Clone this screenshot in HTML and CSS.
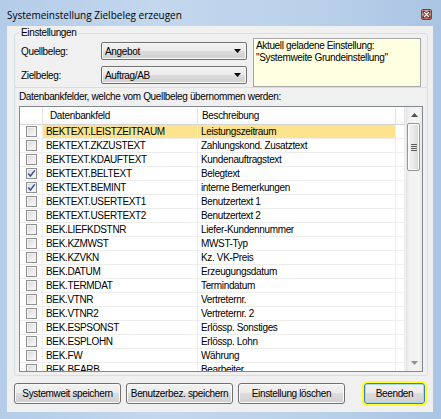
FILE: index.html
```html
<!DOCTYPE html>
<html lang="de">
<head>
<meta charset="utf-8">
<title>Systemeinstellung Zielbeleg erzeugen</title>
<link rel="stylesheet" href="styles.css">
</head>
<body>
<div class="window">
  <div class="titlebar">
    <span class="title">Systemeinstellung Zielbeleg erzeugen</span>
    <span class="close"><svg width="9" height="9" viewBox="0 0 9 9"><path d="M2 2 L7 7 M7 2 L2 7" stroke="#4a2420" stroke-width="2.6" stroke-linecap="square"/><path d="M2 2 L7 7 M7 2 L2 7" stroke="#fff" stroke-width="1.3"/></svg></span>
  </div>
  <div class="client">
    <fieldset class="group">
      <legend>Einstellungen</legend>
      <div class="settings">
        <div class="fields">
          <div class="fieldrow">
            <span class="lbl">Quellbeleg:</span>
            <div class="combo"><span class="cval">Angebot</span><svg class="carrow" width="7" height="4" viewBox="0 0 7 4"><path d="M0 0 H7 L3.5 4 Z" fill="#000"/></svg></div>
          </div>
          <div class="fieldrow">
            <span class="lbl">Zielbeleg:</span>
            <div class="combo"><span class="cval">Auftrag/AB</span><svg class="carrow" width="7" height="4" viewBox="0 0 7 4"><path d="M0 0 H7 L3.5 4 Z" fill="#000"/></svg></div>
          </div>
        </div>
        <div class="info">Aktuell geladene Einstellung:<br>"Systemweite Grundeinstellung"</div>
      </div>
    </fieldset>
    <div class="panel">
      <div class="listlabel">Datenbankfelder, welche vom Quellbeleg übernommen werden:</div>
      <div class="list">
        <div class="grid">
          <div class="hdr">
            <div class="c0"></div>
            <div class="c1 h1">Datenbankfeld</div>
            <div class="c2 h2">Beschreibung</div>
            <div class="c3"></div>
          </div>
          <div class="row sel"><div class="c0"><span class="cb"></span></div><div class="c1">BEKTEXT.LEISTZEITRAUM</div><div class="c2">Leistungszeitraum</div><div class="c3"></div></div>
          <div class="row"><div class="c0"><span class="cb"></span></div><div class="c1">BEKTEXT.ZKZUSTEXT</div><div class="c2">Zahlungskond. Zusatztext</div><div class="c3"></div></div>
          <div class="row"><div class="c0"><span class="cb"></span></div><div class="c1">BEKTEXT.KDAUFTEXT</div><div class="c2">Kundenauftragstext</div><div class="c3"></div></div>
          <div class="row"><div class="c0"><span class="cb"><svg width="9" height="9" viewBox="0 0 9 9"><path d="M1.2 4.6 L3.4 7 L7.8 1.4" fill="none" stroke="#3f4f9a" stroke-width="1.5"/></svg></span></div><div class="c1">BEKTEXT.BELTEXT</div><div class="c2">Belegtext</div><div class="c3"></div></div>
          <div class="row"><div class="c0"><span class="cb"><svg width="9" height="9" viewBox="0 0 9 9"><path d="M1.2 4.6 L3.4 7 L7.8 1.4" fill="none" stroke="#3f4f9a" stroke-width="1.5"/></svg></span></div><div class="c1">BEKTEXT.BEMINT</div><div class="c2">interne Bemerkungen</div><div class="c3"></div></div>
          <div class="row"><div class="c0"><span class="cb"></span></div><div class="c1">BEKTEXT.USERTEXT1</div><div class="c2">Benutzertext 1</div><div class="c3"></div></div>
          <div class="row"><div class="c0"><span class="cb"></span></div><div class="c1">BEKTEXT.USERTEXT2</div><div class="c2">Benutzertext 2</div><div class="c3"></div></div>
          <div class="row"><div class="c0"><span class="cb"></span></div><div class="c1">BEK.LIEFKDSTNR</div><div class="c2">Liefer-Kundennummer</div><div class="c3"></div></div>
          <div class="row"><div class="c0"><span class="cb"></span></div><div class="c1">BEK.KZMWST</div><div class="c2">MWST-Typ</div><div class="c3"></div></div>
          <div class="row"><div class="c0"><span class="cb"></span></div><div class="c1">BEK.KZVKN</div><div class="c2">Kz. VK-Preis</div><div class="c3"></div></div>
          <div class="row"><div class="c0"><span class="cb"></span></div><div class="c1">BEK.DATUM</div><div class="c2">Erzeugungsdatum</div><div class="c3"></div></div>
          <div class="row"><div class="c0"><span class="cb"></span></div><div class="c1">BEK.TERMDAT</div><div class="c2">Termindatum</div><div class="c3"></div></div>
          <div class="row"><div class="c0"><span class="cb"></span></div><div class="c1">BEK.VTNR</div><div class="c2">Vertreternr.</div><div class="c3"></div></div>
          <div class="row"><div class="c0"><span class="cb"></span></div><div class="c1">BEK.VTNR2</div><div class="c2">Vertreternr. 2</div><div class="c3"></div></div>
          <div class="row"><div class="c0"><span class="cb"></span></div><div class="c1">BEK.ESPSONST</div><div class="c2">Erlössp. Sonstiges</div><div class="c3"></div></div>
          <div class="row"><div class="c0"><span class="cb"></span></div><div class="c1">BEK.ESPLOHN</div><div class="c2">Erlössp. Lohn</div><div class="c3"></div></div>
          <div class="row"><div class="c0"><span class="cb"></span></div><div class="c1">BEK.FW</div><div class="c2">Währung</div><div class="c3"></div></div>
          <div class="row"><div class="c0"><span class="cb"></span></div><div class="c1">BEK.BEARB</div><div class="c2">Bearbeiter</div><div class="c3"></div></div>
        </div>
        <div class="vscroll">
          <div class="sbtn"><svg width="7" height="4" viewBox="0 0 7 4"><path d="M0 4 H7 L3.5 0 Z" fill="#505050"/></svg></div>
          <div class="thumb"><span class="grip"></span></div>
          <div class="track"></div>
          <div class="sbtn"><svg width="7" height="4" viewBox="0 0 7 4"><path d="M0 0 H7 L3.5 4 Z" fill="#909090"/></svg></div>
        </div>
      </div>
    </div>
    <div class="buttons">
      <div class="btn">Systemweit speichern</div>
      <div class="btn">Benutzerbez. speichern</div>
      <div class="btn">Einstellung löschen</div>
      <div class="btn default">Beenden</div>
    </div>
  </div>
</div>
</body>
</html>
```
FILE: styles.css
```css
* { box-sizing: border-box; }
html, body { margin: 0; padding: 0; }
body {
  width: 441px;
  height: 419px;
  overflow: hidden;
  font-family: "Liberation Sans", Arial, sans-serif;
  font-size: 10px;
  letter-spacing: -0.35px;
  color: #000;
  background: #fff;
}
.window {
  width: 441px;
  height: 419px;
  display: flex;
  flex-direction: column;
  padding: 0 8px 7px 7px;
  background: linear-gradient(to right, #b4cce8 0%, #c3d7ee 35%, #bbd1ea 70%, #aac4e3 100%);
}
.titlebar {
  height: 26px;
  flex: none;
  display: flex;
  align-items: flex-start;
  justify-content: space-between;
}
.title {
  font-family: "Open Sans", "Liberation Sans", sans-serif;
  font-size: 10px;
  letter-spacing: 0;
  line-height: 14px;
  margin-top: 8px;
  color: #000;
}
.close {
  width: 11px;
  height: 11px;
  margin-top: 9px;
  margin-right: 1px;
  border: 1px solid #7a4038;
  border-radius: 2px;
  background: linear-gradient(#e2a79c, #c06c60);
  display: flex;
  align-items: center;
  justify-content: center;
}
.close svg { display: block; }
.client {
  flex: 1;
  background: #f0f0f0;
  padding: 2px 5px 0 7px;
  display: flex;
  flex-direction: column;
}
.group {
  margin: 0;
  padding: 0 6px 0 5px;
  border: 1px solid #d5dfe5;
  border-radius: 3px;
}
.group legend {
  padding: 0 1px;
  margin-left: 0;
  line-height: 10px;
  font-size: 10px;
}
.settings {
  display: flex;
  gap: 6px;
}
.fields {
  width: 227px;
  padding-top: 4px;
  display: flex;
  flex-direction: column;
  gap: 6px;
}
.fieldrow {
  display: flex;
  align-items: center;
  height: 18px;
}
.lbl {
  width: 81px;
  padding-left: 1px;
}
.combo {
  flex: 1;
  height: 18px;
  border: 1px solid #707070;
  border-radius: 2px;
  background: linear-gradient(#f2f2f2 0%, #ebebeb 50%, #dddddd 50%, #cfcfcf 100%);
  box-shadow: inset 0 0 0 1px #f8f8f8;
  display: flex;
  align-items: center;
  justify-content: space-between;
  padding: 0 5px 0 3px;
}
.carrow { display: block; }
.info {
  flex: 1;
  height: 49px;
  background: #ffffe1;
  border: 1px solid #a7a7a7;
  padding: 1px 2px;
  line-height: 12px;
}
.panel {
  margin-top: -1px;
  border: 1px solid #d5dfe5;
  border-radius: 0 0 3px 3px;
  padding: 2px 4px 3px 4px;
}
.listlabel {
  line-height: 13px;
  margin-bottom: 3px;
}
.list {
  height: 266px;
  border: 1px solid #828790;
  background: #fff;
  display: flex;
  overflow: hidden;
}
.grid {
  flex: 1;
  overflow: hidden;
}
.hdr, .row {
  display: flex;
}
.hdr {
  height: 18px;
  border-bottom: 1px solid #d5d5d5;
  background: linear-gradient(#ffffff, #ffffff 60%, #f7f8f9);
  align-items: stretch;
  line-height: 17px;
}
.hdr > div { border-right: 1px solid #e3e5e7; }
.c0 { width: 23px; flex: none; }
.c1 { width: 155px; flex: none; padding-left: 3px; white-space: nowrap; overflow: hidden; }
.c2 { width: 198px; flex: none; padding-left: 3px; white-space: nowrap; overflow: hidden; }
.c3 { flex: 1; }
.hdr .h1 { padding-left: 7px; }
.hdr .h2 { padding-left: 4px; }
.row {
  height: 14px;
  border-bottom: 1px solid #ededed;
  line-height: 13px;
}
.row > div { border-right: 1px solid #ededed; }
.row .c0 {
  display: flex;
  align-items: center;
  justify-content: center;
}
.row.sel .c1, .row.sel .c2 { background: #fde38b; }
.cb {
  width: 11px;
  height: 11px;
  border: 1px solid #8f8f8f;
  background: linear-gradient(135deg, #d6d6d6 0%, #eeeeee 60%, #fbfbfb 100%);
  box-shadow: inset 0 0 0 1px #f3f3f3;
  display: flex;
  align-items: center;
  justify-content: center;
}
.cb svg { display: block; }
.vscroll {
  width: 17px;
  flex: none;
  display: flex;
  flex-direction: column;
  background: linear-gradient(to right, #e4e4e4 0%, #f2f2f2 20%, #f4f4f4 80%, #e9e9e9 100%);
  border-left: 1px solid #f0f0f0;
}
.sbtn {
  height: 16px;
  flex: none;
  display: flex;
  align-items: center;
  justify-content: center;
}
.sbtn svg { display: block; }
.thumb {
  height: 48px;
  margin: 0 2px 0 1px;
  border: 1px solid #969696;
  border-radius: 2px;
  background: linear-gradient(to right, #f4f4f4 0%, #e9e9e9 50%, #d8d8d8 100%);
  box-shadow: inset 0 0 0 1px #fbfbfb;
  display: flex;
  align-items: center;
  justify-content: center;
}
.grip {
  width: 6px;
  height: 7px;
  background: repeating-linear-gradient(#5c5c5c 0, #5c5c5c 1px, #e8e8e8 1px, #e8e8e8 2px);
}
.track { flex: 1; }
.buttons {
  margin-top: 7px;
  display: flex;
  gap: 5px;
}
.btn {
  width: 107px;
  height: 21px;
  border: 1px solid #707070;
  border-radius: 3px;
  background: linear-gradient(#f2f2f2 0%, #ebebeb 50%, #dddddd 50%, #cfcfcf 100%);
  box-shadow: inset 0 0 0 1px #fbfbfb;
  display: flex;
  align-items: center;
  justify-content: center;
}
.btn.default {
  width: 61px;
  margin-left: auto;
  margin-right: 3px;
  border-color: #3c7fb1;
  box-shadow: inset 0 0 0 1px #a9d8f3;
  outline: 2px solid #ffff1e;
}
```
